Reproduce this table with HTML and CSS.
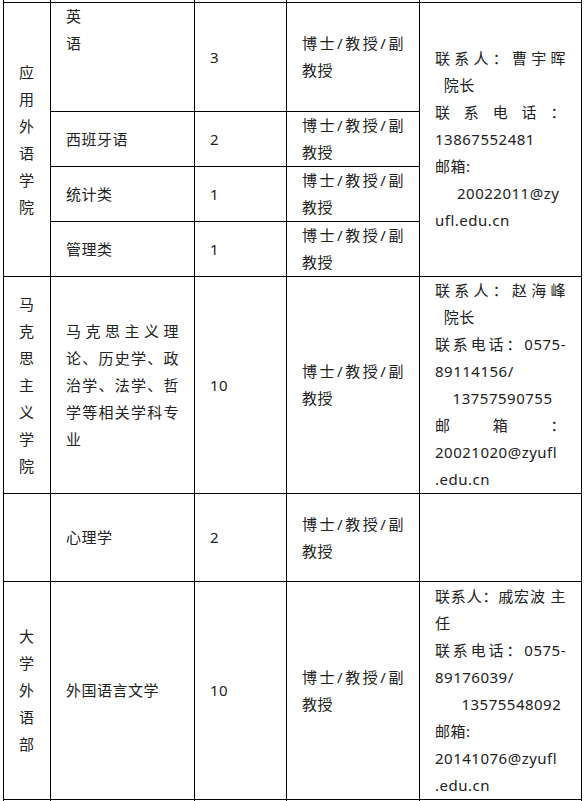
FILE: index.html
```html
<!DOCTYPE html>
<html lang="zh-CN">
<head>
<meta charset="utf-8">
<title>招聘岗位</title>
<link rel="stylesheet" href="styles.css">
</head>
<body>
<table class="jobs">
  <colgroup>
    <col class="c-dept">
    <col class="c-major">
    <col class="c-num">
    <col class="c-title">
    <col class="c-contact">
  </colgroup>
  <tbody>
    <tr class="cont-top"><td></td><td></td><td></td><td></td><td></td></tr>
    <tr class="r-tall">
      <td rowspan="4">应用外语学院</td>
      <td class="top">英<br>语</td>
      <td>3</td>
      <td>博士/教授/副教授</td>
      <td rowspan="4">
        <span class="ln jl">联系人：曹宇晖</span>
        <span class="ln">&nbsp;&nbsp;院长</span>
        <span class="ln jl">联系电话：</span>
        <span class="ln">13867552481</span>
        <span class="ln">邮箱:</span>
        <span class="ln">&nbsp;&nbsp;&nbsp;&nbsp;&nbsp;20022011@zy</span>
        <span class="ln">ufl.edu.cn</span>
      </td>
    </tr>
    <tr>
      <td>西班牙语</td>
      <td>2</td>
      <td>博士/教授/副教授</td>
    </tr>
    <tr>
      <td>统计类</td>
      <td>1</td>
      <td>博士/教授/副教授</td>
    </tr>
    <tr>
      <td>管理类</td>
      <td>1</td>
      <td>博士/教授/副教授</td>
    </tr>
    <tr>
      <td>马克思主义学院</td>
      <td>马克思主义理论、历史学、政治学、法学、哲学等相关学科专业</td>
      <td>10</td>
      <td>博士/教授/副教授</td>
      <td>
        <span class="ln jl">联系人：赵海峰</span>
        <span class="ln">&nbsp;&nbsp;院长</span>
        <span class="ln jl">联系电话：0575-</span>
        <span class="ln">89114156/</span>
        <span class="ln">&nbsp;&nbsp;&nbsp;&nbsp;13757590755</span>
        <span class="ln jl">邮箱：</span>
        <span class="ln">20021020@zyufl</span>
        <span class="ln">.edu.cn</span>
      </td>
    </tr>
    <tr class="r-mid">
      <td></td>
      <td>心理学</td>
      <td>2</td>
      <td>博士/教授/副教授</td>
      <td></td>
    </tr>
    <tr class="r-last">
      <td>大学外语部</td>
      <td>外国语言文学</td>
      <td>10</td>
      <td>博士/教授/副教授</td>
      <td>
        <span class="ln jl">联系人：戚宏波 主</span>
        <span class="ln">任</span>
        <span class="ln jl">联系电话：0575-</span>
        <span class="ln">89176039/</span>
        <span class="ln">&nbsp;&nbsp;&nbsp;&nbsp;&nbsp;&nbsp;13575548092</span>
        <span class="ln">邮箱:</span>
        <span class="ln">20141076@zyufl</span>
        <span class="ln">.edu.cn</span>
      </td>
    </tr>
    <tr class="cont-bottom"><td></td><td></td><td></td><td></td><td></td></tr>
  </tbody>
</table>
</body>
</html>
```

FILE: styles.css
```css
html, body {
  margin: 0;
  padding: 0;
  background: #ffffff;
}

body {
  padding-left: 3px;
  font-family: "Noto Sans", "Noto Sans CJK SC", sans-serif;
  font-size: 15px;
  line-height: 27px;
  letter-spacing: 0.5px;
  color: #222222;
}

.jobs {
  border-collapse: collapse;
  table-layout: fixed;
  width: 578px;
}

.c-dept { width: 47px; }
.c-major { width: 144px; }
.c-num { width: 92px; }
.c-title { width: 133px; }
.c-contact { width: 162px; }

.jobs td {
  border: 1px solid #000000;
  padding: 0 15px;
  vertical-align: middle;
  text-align: justify;
  word-break: normal;
}

.jobs td.top {
  vertical-align: top;
}

.cont-top td {
  border-top: none;
  height: 2px;
  padding: 0;
}

.r-tall td {
  height: 108px;
}

.r-mid td {
  height: 87px;
}

.r-last td {
  height: 217px;
}

.cont-bottom td {
  border-bottom: none;
  height: 30px;
}

.ln {
  display: block;
  white-space: nowrap;
}

.ln.jl {
  text-align-last: justify;
}
```
